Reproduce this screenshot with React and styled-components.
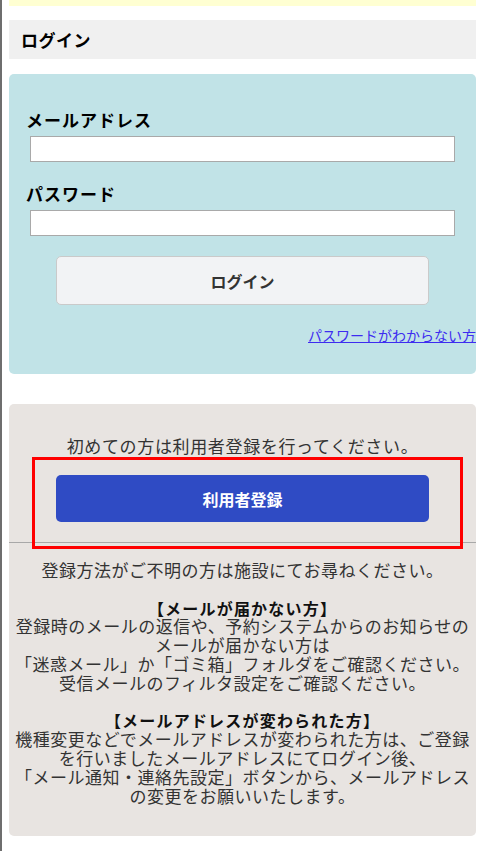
import React from "react";
import styled, { createGlobalStyle } from "styled-components";

const GlobalStyle = createGlobalStyle`
  html, body {
    margin: 0;
    padding: 0;
    background: #fff;
  }
  body {
    font-family: "Noto Sans CJK JP", "Noto Sans", sans-serif;
    color: #000;
  }
`;

const Page = styled.div`
  border-left: 2px solid #6e6e6e;
  min-height: 851px;
  padding: 0 9px 0 7px;
  box-sizing: border-box;
`;

const Notice = styled.div`
  height: 6px;
  background: #ffffd2;
`;

const Heading = styled.h2`
  margin: 14px 0 0;
  height: 39px;
  display: flex;
  align-items: center;
  padding-left: 12px;
  background: #f0f0f0;
  font-size: 17px;
  font-weight: 700;
  letter-spacing: 0.5px;
`;

const LoginCard = styled.form`
  margin-top: 15px;
  background: #c1e3e7;
  border-radius: 5px;
  padding: 34px 0 29px;
  display: flex;
  flex-direction: column;
`;

const Label = styled.label`
  display: block;
  padding-left: 17px;
  margin-top: ${(p) => (p.$first ? "0" : "20px")};
  font-size: 17px;
  font-weight: 700;
  line-height: 24px;
  letter-spacing: 1px;
`;

const Input = styled.input`
  display: block;
  box-sizing: border-box;
  margin: 4px 21px 0;
  width: calc(100% - 42px);
  height: 26px;
  border: 1px solid #a9a9a9;
  background: #fff;
  outline: none;
`;

const Button = styled.button`
  box-sizing: border-box;
  align-self: center;
  width: 80%;
  margin-top: 20px;
  border-radius: 5px;
  font-family: inherit;
  font-weight: 700;
  font-size: 16px;
  cursor: pointer;
  height: ${(p) => (p.$primary ? "47px" : "49px")};
  background: ${(p) => (p.$primary ? "#2f4bc4" : "#f2f3f5")};
  color: ${(p) => (p.$primary ? "#fff" : "#333")};
  border: ${(p) => (p.$primary ? "none" : "1px solid #cacaca")};
`;

const ForgotLink = styled.a`
  align-self: flex-end;
  margin-top: 20px;
  font-size: 14px;
  line-height: 20px;
  color: #3d2cf0;
  text-decoration: underline;
`;

const InfoCard = styled.section`
  position: relative;
  margin-top: 30px;
  background: #e8e4e1;
  border-radius: 5px;
  color: #333;
  text-align: center;
  letter-spacing: 0.5px;
`;

const RegisterArea = styled.div`
  padding: 32px 0 20px;
  border-bottom: 1px solid #a8a8a8;
  display: flex;
  flex-direction: column;
`;

const Lead = styled.p`
  margin: 0;
  font-size: 17px;
  line-height: 19px;
  letter-spacing: 0.65px;
`;

const Highlight = styled.div`
  position: absolute;
  top: 53px;
  left: 23px;
  width: 431px;
  height: 92px;
  box-sizing: border-box;
  border: 3px solid #ff0000;
  pointer-events: none;
`;

const HelpArea = styled.div`
  padding: 18px 0 31px;
  font-size: 17px;
  line-height: 18.8px;
`;

const Para = styled.p`
  margin: ${(p) => (p.$gap ? "18.8px 0 0" : "0")};
  white-space: nowrap;
`;

const Title = styled.strong`
  font-weight: 700;
  font-size: 16px;
  letter-spacing: 1.2px;
  color: #111;
`;

export default function App() {
  return (
    <>
      <GlobalStyle />
      <Page>
        <Notice />
        <Heading>ログイン</Heading>
        <LoginCard onSubmit={(e) => e.preventDefault()}>
          <Label $first>メールアドレス</Label>
          <Input type="email" />
          <Label>パスワード</Label>
          <Input type="password" />
          <Button type="submit">ログイン</Button>
          <ForgotLink href="#">パスワードがわからない方</ForgotLink>
        </LoginCard>
        <InfoCard>
          <RegisterArea>
            <Lead>初めての方は利用者登録を行ってください。</Lead>
            <Button type="button" $primary>
              利用者登録
            </Button>
          </RegisterArea>
          <HelpArea>
            <Para>登録方法がご不明の方は施設にてお尋ねください。</Para>
            <Para $gap>
              <Title>【メールが届かない方】</Title>
              <br />
              登録時のメールの返信や、予約システムからのお知らせの
              <br />
              メールが届かない方は
              <br />
              「迷惑メール」か「ゴミ箱」フォルダをご確認ください。
              <br />
              受信メールのフィルタ設定をご確認ください。
            </Para>
            <Para $gap>
              <Title>【メールアドレスが変わられた方】</Title>
              <br />
              機種変更などでメールアドレスが変わられた方は、ご登録
              <br />
              を行いましたメールアドレスにてログイン後、
              <br />
              「メール通知・連絡先設定」ボタンから、メールアドレス
              <br />
              の変更をお願いいたします。
            </Para>
          </HelpArea>
          <Highlight />
        </InfoCard>
      </Page>
    </>
  );
}
